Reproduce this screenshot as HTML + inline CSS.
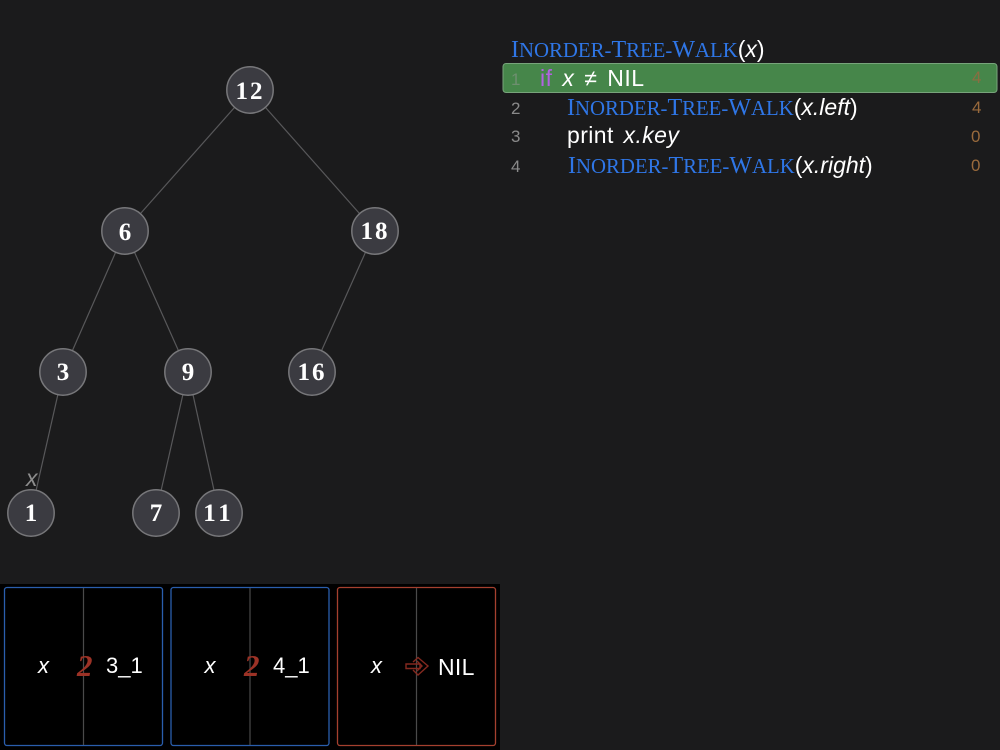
<!DOCTYPE html>
<html>
<head>
<meta charset="utf-8">
<style>
html,body{margin:0;padding:0;background:#1b1b1c;}
#p{position:relative;width:1000px;height:750px;overflow:hidden;background:#1b1b1c;font-family:"Liberation Sans",sans-serif;color:#fff;}
svg{position:absolute;left:0;top:0;}
.t{position:absolute;white-space:nowrap;line-height:28px;height:28px;font-size:23px;}
.sc{font-family:"Liberation Serif",serif;color:#2f76e6;font-size:20.8px;letter-spacing:0;}
.sc b{font-weight:normal;font-size:24px;}
i{font-style:italic;}
.n{position:absolute;font-size:17px;color:#8a8a8a;line-height:20px;}
.c{position:absolute;font-size:17px;color:#996a3c;line-height:20px;}
</style>
</head>
<body>
<div id="p">
<svg width="1000" height="750">
<g stroke="#58585a" stroke-width="1.2">
<line x1="250" y1="90" x2="125" y2="231"/>
<line x1="250" y1="90" x2="375" y2="231"/>
<line x1="125" y1="231" x2="63" y2="372"/>
<line x1="125" y1="231" x2="188" y2="372"/>
<line x1="375" y1="231" x2="312" y2="372"/>
<line x1="63" y1="372" x2="31" y2="513"/>
<line x1="188" y1="372" x2="156" y2="513"/>
<line x1="188" y1="372" x2="219" y2="513"/>
</g>
<g fill="#3b3b41" stroke="#77777a" stroke-width="1.5">
<circle cx="250" cy="90" r="23.2"/>
<circle cx="125" cy="231" r="23.2"/>
<circle cx="375" cy="231" r="23.2"/>
<circle cx="63" cy="372" r="23.2"/>
<circle cx="188" cy="372" r="23.2"/>
<circle cx="312" cy="372" r="23.2"/>
<circle cx="31" cy="513" r="23.2"/>
<circle cx="156" cy="513" r="23.2"/>
<circle cx="219" cy="513" r="23.2"/>
</g>
<g fill="#fff" font-family="'Liberation Serif',serif" font-weight="bold" font-size="25" text-anchor="middle">
<text x="250" y="99" letter-spacing="2">12</text>
<text x="125" y="240">6</text>
<text x="375" y="239" letter-spacing="2">18</text>
<text x="63" y="380">3</text>
<text x="188" y="380">9</text>
<text x="312" y="380" letter-spacing="2">16</text>
<text x="31" y="521">1</text>
<text x="156" y="521">7</text>
<text x="219" y="521" letter-spacing="4">11</text>
</g>
<text x="26" y="486" fill="#8d8d8d" font-family="'Liberation Sans',sans-serif" font-style="italic" font-size="23">x</text>

<rect x="503" y="63.5" width="494" height="29" rx="3" fill="#46864a" stroke="#78a47b" stroke-width="1"/>

<rect x="0" y="584" width="500" height="166" fill="#000"/>
<rect x="4.5" y="587.5" width="158" height="158" rx="2.5" fill="none" stroke="#2a5ead" stroke-width="1.3"/>
<rect x="171" y="587.5" width="158" height="158" rx="2.5" fill="none" stroke="#2a5ead" stroke-width="1.3"/>
<rect x="337.5" y="587.5" width="158" height="158" rx="2.5" fill="none" stroke="#a5402f" stroke-width="1.3"/>
<g stroke="#4a4a4a" stroke-width="1.2">
<line x1="83.5" y1="588" x2="83.5" y2="745"/>
<line x1="250" y1="588" x2="250" y2="745"/>
<line x1="416.5" y1="588" x2="416.5" y2="745"/>
</g>
<g fill="#fff" font-family="'Liberation Sans',sans-serif" font-size="22">
<text x="38" y="673" font-style="italic">x</text>
<text x="204.500" y="673" font-style="italic">x</text>
<text x="371" y="673" font-style="italic">x</text>
<text x="106" y="673">3_1</text>
<text x="273" y="673">4_1</text>
<text x="438" y="675" font-size="23" letter-spacing=".3">NIL</text>
</g>
<g fill="#9c3226" font-family="'Liberation Serif',serif" font-weight="bold" font-style="italic" font-size="31">
<text x="77" y="676">2</text>
<text x="244" y="676">2</text>
</g>
<g fill="none" stroke="#84291f" stroke-width="1.4">
<path d="M406 664H420V668.500H406Z"/>
<path d="M413 662L418 657.500L428 666L418 675L413 670"/>
<path d="M417 661L422 666L417 671"/>
</g>
</svg>

<div class="t" style="left:511px;top:35px;"><span class="sc"><b>I</b>NORDER-<b>T</b>REE-<b>W</b>ALK</span>(<i>x</i>)</div>
<div class="n" style="left:511px;top:70px;color:#6f8f70;">1</div>
<div class="t" style="left:540px;top:64px;letter-spacing:.5px;word-spacing:3px;"><span style="color:#b162e0;">if</span> <i>x</i> ≠ NIL</div>
<div class="c" style="left:972px;top:68px;color:#8b6d41;">4</div>

<div class="n" style="left:511px;top:99px;">2</div>
<div class="t" style="left:567px;top:93px;"><span class="sc"><b>I</b>NORDER-<b>T</b>REE-<b>W</b>ALK</span>(<i>x.left</i>)</div>
<div class="c" style="left:972px;top:98px;">4</div>

<div class="n" style="left:511px;top:127px;">3</div>
<div class="t" style="left:567px;top:121px;letter-spacing:.4px;word-spacing:3px;">print <i>x.key</i></div>
<div class="c" style="left:971px;top:127px;">0</div>

<div class="n" style="left:511px;top:157px;">4</div>
<div class="t" style="left:568px;top:151px;"><span class="sc"><b>I</b>NORDER-<b>T</b>REE-<b>W</b>ALK</span>(<i>x.right</i>)</div>
<div class="c" style="left:971px;top:156px;">0</div>
</div>
</body>
</html>
